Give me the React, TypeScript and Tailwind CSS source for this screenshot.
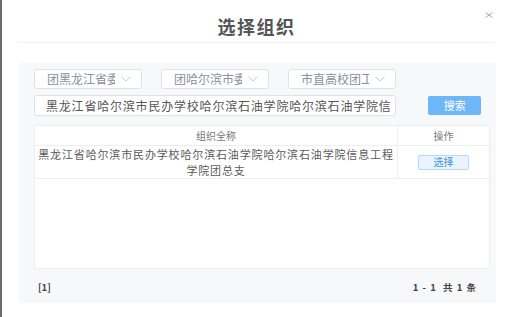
import React from 'react';

const selects = ['团黑龙江省委', '团哈尔滨市委', '市直高校团工委'];

function Chevron() {
  return (
    <svg width="10" height="6" viewBox="0 0 10 6" className="shrink-0">
      <path d="M0.5 0.8 L5 5 L9.5 0.8" fill="none" stroke="#c8cbd2" strokeWidth="1" />
    </svg>
  );
}

function SelectBox({ label }: { label: string }) {
  return (
    <div className="flex h-[20px] w-[108px] items-center rounded-[3px] border border-[#dfe2e8] bg-white pl-[12px] pr-[10px]">
      <span className="w-[68px] overflow-hidden whitespace-nowrap text-[12px] leading-none text-[#8a8f99]">{label}</span>
      <span className="ml-auto">
        <Chevron />
      </span>
    </div>
  );
}

export default function App() {
  return (
    <div className="h-[317px] w-[511px] overflow-hidden border-l-2 border-[#6b6b6b] bg-white font-['Noto_Sans_CJK_SC',sans-serif] text-[#555]">
      {/* header */}
      <div className="relative flex h-[42px] items-center justify-center pt-[9px]">
        <h1 className="text-[18px] font-bold leading-none tracking-[1.5px] text-[#555]">选择组织</h1>
        <svg width="8" height="6" viewBox="0 0 8 6" className="absolute right-[18px] top-[12px]">
          <path d="M0.5 0.5 L7.5 5.5 M7.5 0.5 L0.5 5.5" stroke="#a8a8a8" strokeWidth="1" />
        </svg>
      </div>
      <div className="mx-[17px] h-px bg-[#f0f1f3]" />

      {/* panel */}
      <div className="ml-[17px] mt-[20px] h-[240px] w-[477px] bg-[#f7f8fa] px-[15px] pt-[6px]">
        <div className="flex gap-[19px]">
          {selects.map((s) => (
            <SelectBox key={s} label={s} />
          ))}
        </div>

        <div className="mt-[6px] flex items-center">
          <div className="h-[21px] w-[371px] rounded-[3px] border border-[#dfe2e8] bg-white pl-[11px]">
            <div className="w-[346px] overflow-hidden whitespace-nowrap text-[12px] leading-[19px] tracking-[0.8px] text-[#555]">
              黑龙江省哈尔滨市民办学校哈尔滨石油学院哈尔滨石油学院信息工程学院团总支
            </div>
          </div>
          <button className="ml-[32px] flex h-[19px] w-[54px] items-center justify-center rounded-[2px] bg-[#6db6f7] text-[11px] leading-none text-white">
            搜索
          </button>
        </div>

        {/* table */}
        <div className="mt-[9px] h-[144px] w-[456px] border border-[#eceef2] bg-white">
          <div className="flex h-[20px] border-b border-[#eceef2] text-[10px] text-[#777]">
            <div className="flex w-[363px] items-center justify-center border-r border-[#eceef2]">组织全称</div>
            <div className="flex flex-1 items-center justify-center">操作</div>
          </div>
          <div className="flex h-[33px] border-b border-[#eceef2]">
            <div className="flex w-[363px] flex-col items-center justify-center border-r border-[#eceef2] text-[11px] leading-[16px] tracking-[0.85px] text-[#5a5a5a]">
              <span className="whitespace-nowrap">黑龙江省哈尔滨市民办学校哈尔滨石油学院哈尔滨石油学院信息工程</span>
              <span className="whitespace-nowrap">学院团总支</span>
            </div>
            <div className="flex flex-1 items-center justify-center">
              <button className="flex h-[15px] w-[51px] items-center justify-center rounded-[2px] border border-[#b3d8fb] bg-[#e9f4ff] text-[10px] leading-none text-[#3f8fe0]">
                选择
              </button>
            </div>
          </div>
        </div>

        {/* pagination */}
        <div className="mt-[14px] flex items-center justify-between px-[4px] text-[9.5px] font-bold leading-none text-[#444]">
          <span>[1]</span>
          <span className="tracking-[1px]">1 - 1&nbsp;&nbsp;共 1 条</span>
        </div>
      </div>
    </div>
  );
}
